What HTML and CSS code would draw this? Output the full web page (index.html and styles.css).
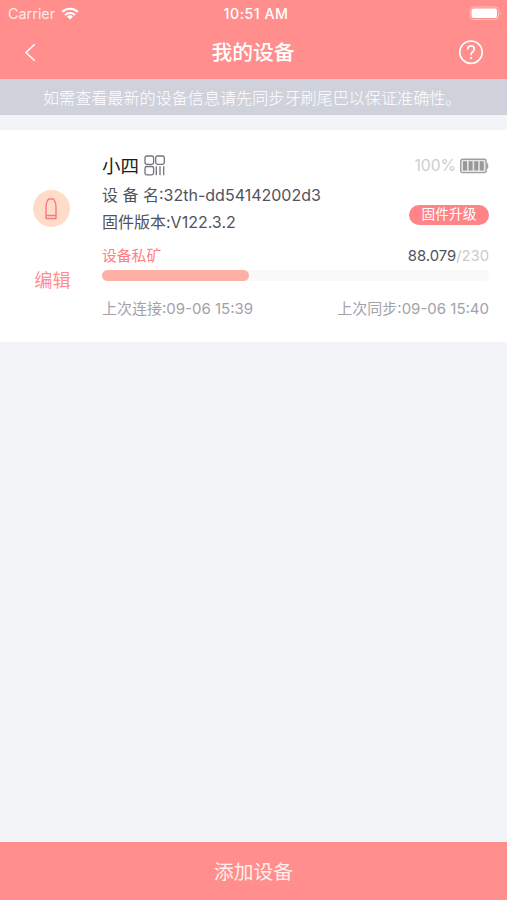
FILE: index.html
```html
<!DOCTYPE html>
<html lang="zh-CN">
<head>
  <meta charset="UTF-8" />
  <title>我的设备</title>
  <link rel="stylesheet" href="styles.css">
</head>
<body>

  <header>
    <div class="status">
      <div class="carrier">
        <span>Carrier</span>
        <svg class="wifi" width="18" height="13" viewBox="0 0 18 13">
          <path d="M1.2 4.9a11.2 11.2 0 0 1 15.6 0M4 8a7.2 7.2 0 0 1 10 0" fill="none" stroke="#fff" stroke-width="2.2" />
          <path d="M9 12.6L6 9.6a4.3 4.3 0 0 1 6 0z" fill="#fff" />
        </svg>
      </div>
      <div class="clock">10:51 AM</div>
      <svg class="power" width="33" height="15" viewBox="0 0 33 15">
        <rect x="1" y="1" width="28.5" height="12.5" rx="3.5" fill="none" stroke="#ffbcb9" stroke-width="1" />
        <rect x="2.5" y="2.5" width="25.5" height="9.5" rx="2" fill="#fff" />
        <path d="M31 5.4q1.6 1.9 0 3.8z" fill="#ffbcb9" />
      </svg>
    </div>
    <div class="nav">
      <svg class="back" width="12" height="19" viewBox="0 0 12 19">
        <path d="M10.8 .3L2 8.5l8.8 8.2" fill="none" stroke="#fff" stroke-width="1.5" />
      </svg>
      <h1>我的设备</h1>
      <svg class="help" width="26" height="26" viewBox="0 0 26 26">
        <circle cx="13" cy="12.2" r="11.2" fill="none" stroke="#fff" stroke-width="1.6" />
        <path d="M9.7 9.4c0-2.1 1.4-3.5 3.3-3.5s3.3 1.3 3.3 3.1c0 2.6-3.2 2.8-3.2 5.7v.6" fill="none" stroke="#fff" stroke-width="1.7" />
        <circle cx="13.1" cy="18.1" r="1.1" fill="#fff" />
      </svg>
    </div>
  </header>

  <div class="notice">如需查看最新的设备信息请先同步牙刷尾巴以保证准确性。</div>

  <main>
    <div class="device">
      <div class="side">
        <div class="avatar">
          <svg width="14" height="23" viewBox="0 0 14 23">
            <path d="M2 21.4V9.4C2 6.4 3 4 4.4 2.1h5.2C11 4 12 6.4 12 9.4v12zM2 18.4h10" fill="none" stroke="#fa7c80" stroke-width="1.5" stroke-linejoin="round" />
          </svg>
        </div>
        <a class="edit">编辑</a>
      </div>

      <div class="detail">
        <div class="row name-row">
          <div class="name">
            <span>小四</span>
            <svg width="22" height="21" viewBox="0 0 22 21">
              <g fill="none" stroke="#73757d" stroke-width="1.3">
                <rect x="2" y="1" width="8.6" height="8.3" rx="1.8" />
                <rect x="12.7" y="1" width="8.6" height="8.3" rx="1.8" />
                <rect x="2" y="11.5" width="8.6" height="8.3" rx="1.8" />
                <path d="M13.3 11.2v9M17 11.2v9M20.7 11.2v9" />
              </g>
            </svg>
          </div>
          <div class="charge">
            <span>100%</span>
            <svg width="29" height="16" viewBox="0 0 29 16">
              <rect x=".7" y="1.2" width="25.5" height="13.4" rx="2" fill="#e6e6e7" stroke="#a0a0a2" stroke-width="1.4" />
              <path d="M26.5 5q1.7 0 1.7 1.5v3q0 1.5-1.7 1.5z" fill="#a0a0a2" />
              <path d="M3 3.2h4v9.4H3zM8.6 3.2h4v9.4h-4zM14.2 3.2h4v9.4h-4zM19.8 3.2h4v9.4h-4z" fill="#98989a" />
            </svg>
          </div>
        </div>

        <div class="row info-row">
          <div class="info">
            <p class="model">设 备 名:32th-dd54142002d3</p>
            <p class="version">固件版本:V122.3.2</p>
          </div>
          <button class="upgrade">固件升级</button>
        </div>

        <div class="row mine-row">
          <span class="mine">设备私矿</span>
          <span class="amount">88.079<i>/230</i></span>
        </div>
        <div class="bar"><div class="bar-fill" style="width: 38.1%"></div></div>

        <div class="row times">
          <span>上次连接:09-06 15:39</span>
          <span>上次同步:09-06 15:40</span>
        </div>
      </div>
    </div>
  </main>

  <footer>添加设备</footer>

</body>
</html>
```
FILE: styles.css
```css
* {
  box-sizing: border-box;
}

body {
  font-family: Inter, "Noto Sans CJK SC", sans-serif;
  margin: 0;
  height: 900px;
  display: flex;
  flex-direction: column;
  background: #f2f4f8;
  color: #51525d;
}

header {
  height: 79px;
  background: #ff8e8c;
  color: #fff;
}

.status {
  height: 27px;
  padding: 0 5px 0 8px;
  display: grid;
  grid-template-columns: 1fr auto 1fr;
  align-items: center;
  font-size: 14px;
}

.carrier {
  display: flex;
  align-items: center;
  gap: 6px;
  color: #ffe9e7;
  font-size: 14.4px;
}

.clock {
  margin-left: 2px;
  font-weight: 500;
  font-size: 14.2px;
  letter-spacing: 0.5px;
}

.power {
  justify-self: end;
}

.nav {
  height: 52px;
  padding: 0 23px 0 24px;
  display: grid;
  grid-template-columns: 1fr auto 1fr;
  align-items: center;
}

.nav h1 {
  margin: 0 2px 0 0;
  font-size: 20.8px;
  font-weight: 500;
  line-height: 50px;
}

.help {
  justify-self: end;
}

.notice {
  height: 36px;
  line-height: 38px;
  padding-left: 43px;
  background: #cfd1db;
  color: #fff;
  font-size: 16.1px;
  font-weight: 300;
  white-space: nowrap;
}

main {
  flex: 1;
  padding-top: 15px;
}

.device {
  height: 212px;
  background: #fff;
  display: flex;
  padding: 20px 18px 0 0;
}

.side {
  width: 102px;
  padding-top: 40px;
  display: flex;
  flex-direction: column;
  align-items: center;
}

.avatar {
  width: 37px;
  height: 37px;
  border-radius: 50%;
  background: #ffdcc8;
  display: flex;
  align-items: center;
  justify-content: center;
}

.edit {
  margin: 38px 0 0 3px;
  color: #ff8e8e;
  font-size: 18.2px;
  line-height: 30px;
}

.detail {
  flex: 1;
}

.row {
  display: flex;
  justify-content: space-between;
  align-items: center;
}

.name-row {
  height: 31px;
}

.name {
  display: flex;
  align-items: center;
  gap: 4px;
  color: #1c1c1e;
  font-size: 18.5px;
  line-height: 26px;
}

.charge {
  display: flex;
  align-items: center;
  gap: 4px;
  color: #cdcdcf;
  font-size: 15.7px;
}

.info p {
  margin: 0;
  font-size: 16px;
  line-height: 27px;
}

.info .model {
  padding-top: 1px;
}

.upgrade {
  width: 80px;
  height: 20px;
  margin-top: 12px;
  padding: 0;
  border: none;
  border-radius: 10px;
  background: #ff8488;
  color: #fff;
  font-family: inherit;
  font-size: 13.7px;
  line-height: 19px;
}

.mine-row {
  height: 20px;
  margin-top: 10px;
  font-size: 14.8px;
  line-height: 20px;
}

.mine {
  color: #ff8084;
}

.amount i {
  color: #cbcbcd;
  font-style: normal;
}

.bar {
  height: 11px;
  margin-top: 4px;
  border-radius: 5.5px;
  background: #f9f9f9;
}

.bar-fill {
  height: 100%;
  border-radius: 5.5px;
  background: #ffb0a6;
}

.times {
  height: 20px;
  margin-top: 16px;
  color: #a2a2a9;
  font-size: 15px;
}

footer {
  height: 58px;
  line-height: 60px;
  background: #ff8e8c;
  color: #ffefec;
  text-align: center;
  font-size: 19.8px;
}
```
